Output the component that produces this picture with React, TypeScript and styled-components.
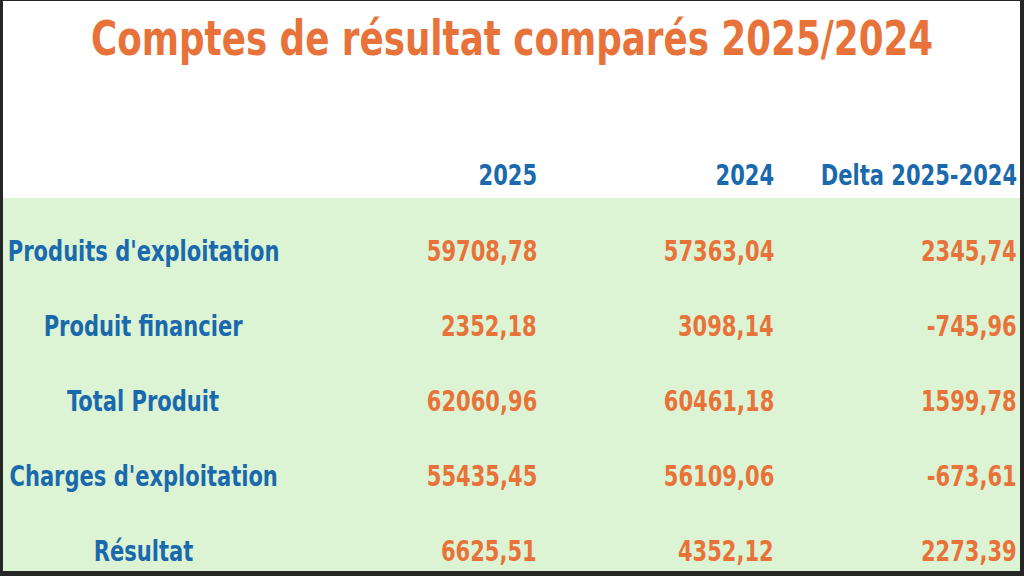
import React from 'react';
import styled, { createGlobalStyle } from 'styled-components';

const GlobalStyle = createGlobalStyle`
  html, body {
    margin: 0;
    padding: 0;
    background: #2b2b2b;
  }
  * {
    box-sizing: border-box;
  }
`;

const Slide = styled.div`
  width: 1024px;
  height: 576px;
  display: flex;
  flex-direction: column;
  background: #ffffff;
  border: solid #262626;
  border-width: 1px 4px 5px 3px;
  overflow: hidden;
  font-family: 'DejaVu Sans Condensed', 'DejaVu Sans', sans-serif;
  font-weight: 700;
  white-space: nowrap;
`;

// the slide uses a tall condensed face; squeeze DejaVu Condensed to match
const Squeeze = styled.span<{ $origin: 'center' | 'right' }>`
  display: inline-block;
  transform: scaleX(0.835);
  transform-origin: ${(p) => p.$origin} center;
`;

const Title = styled.h1`
  flex-shrink: 0;
  margin: 0;
  height: 67px;
  padding-top: 7px;
  text-align: center;
  font-size: 48px;
  line-height: 60px;
  font-weight: 700;
  color: #e8733a;

  ${Squeeze} {
    transform: scaleX(0.827);
  }
`;

const Grid = styled.div`
  display: grid;
  grid-template-columns: 281px 253px 237px 243px;
`;

const HeaderRow = styled(Grid)`
  flex-shrink: 0;
  height: 130px;
  align-items: end;
  padding-bottom: 4px;
`;

const Body = styled.div`
  flex: 1;
  min-height: 0;
  overflow: hidden;
  display: flex;
  flex-direction: column;
  background: #dcf4d4;
  padding-top: 16px;
`;

const Row = styled(Grid)`
  flex-shrink: 0;
  height: 75px;
  align-items: center;
`;

const Head = styled.div`
  text-align: right;
  font-size: 28px;
  line-height: 36px;
  color: #1a69ad;
`;

const Label = styled.div`
  display: flex;
  justify-content: center;
  font-size: 28px;
  line-height: 36px;
  color: #1a69ad;
`;

const Value = styled.div`
  text-align: right;
  font-size: 28px;
  line-height: 36px;
  color: #e8733a;
`;

type Line = {
  label: string;
  y2025: string;
  y2024: string;
  delta: string;
};

const lines: Line[] = [
  { label: "Produits d'exploitation", y2025: '59708,78', y2024: '57363,04', delta: '2345,74' },
  { label: 'Produit financier', y2025: '2352,18', y2024: '3098,14', delta: '-745,96' },
  { label: 'Total Produit', y2025: '62060,96', y2024: '60461,18', delta: '1599,78' },
  { label: "Charges d'exploitation", y2025: '55435,45', y2024: '56109,06', delta: '-673,61' },
  { label: 'Résultat', y2025: '6625,51', y2024: '4352,12', delta: '2273,39' },
];

const heads = ['2025', '2024', 'Delta 2025-2024'];

export default function App() {
  return (
    <>
      <GlobalStyle />
      <Slide>
        <Title>
          <Squeeze $origin="center">Comptes de résultat comparés 2025/2024</Squeeze>
        </Title>
        <HeaderRow>
          <div />
          {heads.map((h) => (
            <Head key={h}>
              <Squeeze $origin="right">{h}</Squeeze>
            </Head>
          ))}
        </HeaderRow>
        <Body>
          {lines.map((l) => (
            <Row key={l.label}>
              <Label>
                <Squeeze $origin="center">{l.label}</Squeeze>
              </Label>
              {[l.y2025, l.y2024, l.delta].map((v, i) => (
                <Value key={i}>
                  <Squeeze $origin="right">{v}</Squeeze>
                </Value>
              ))}
            </Row>
          ))}
        </Body>
      </Slide>
    </>
  );
}
